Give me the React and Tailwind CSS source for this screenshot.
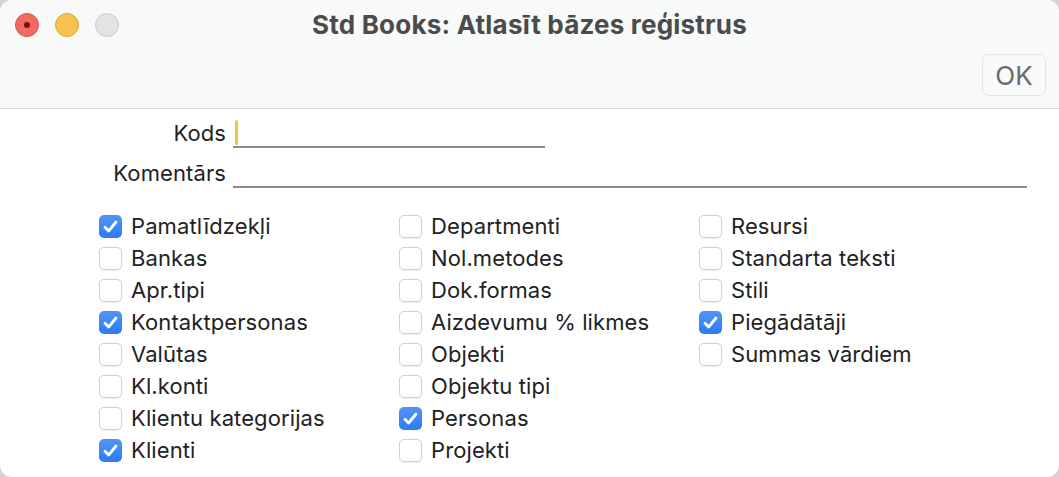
import React from "react";

const columns = [
  [
    ["Pamatlīdzekļi", true],
    ["Bankas", false],
    ["Apr.tipi", false],
    ["Kontaktpersonas", true],
    ["Valūtas", false],
    ["Kl.konti", false],
    ["Klientu kategorijas", false],
    ["Klienti", true],
  ],
  [
    ["Departmenti", false],
    ["Nol.metodes", false],
    ["Dok.formas", false],
    ["Aizdevumu % likmes", false],
    ["Objekti", false],
    ["Objektu tipi", false],
    ["Personas", true],
    ["Projekti", false],
  ],
  [
    ["Resursi", false],
    ["Standarta teksti", false],
    ["Stili", false],
    ["Piegādātāji", true],
    ["Summas vārdiem", false],
  ],
];

function Check({ label, checked }) {
  return (
    <div className="flex h-[32px] items-center gap-[9px]">
      {checked ? (
        <span className="flex h-[23px] w-[23px] items-center justify-center rounded-[5px] bg-gradient-to-b from-[#4f95f8] to-[#2f7af5]">
          <svg width="15" height="13" viewBox="0 0 15 13" fill="none">
            <path d="M2 7.2 L5.6 11 L13 2" stroke="#fff" strokeWidth="2.8" strokeLinecap="round" strokeLinejoin="round" />
          </svg>
        </span>
      ) : (
        <span className="h-[23px] w-[23px] rounded-[5px] border border-[#d2d2d2] bg-white shadow-[0_0.5px_1px_rgba(0,0,0,0.08)]" />
      )}
      <span className="text-[22px] tracking-[0.1px] text-[#222]">{label}</span>
    </div>
  );
}

export default function App() {
  return (
    <div className="h-[477px] w-[1059px] bg-[#d4d4d4] font-['Inter',sans-serif]">
      <div className="flex h-full flex-col overflow-hidden rounded-[12px] bg-white">
        <header className="flex h-[109px] flex-col border-b border-[#dcdcdc] bg-[#f8f9f9]">
          <div className="relative flex h-[49px] items-center justify-center">
            <div className="absolute left-[15px] top-[13px] flex gap-[16px]">
              <span className="flex h-[24px] w-[24px] items-center justify-center rounded-full border border-[#d9564b] bg-[#ef6b5f]">
                <span className="h-[6px] w-[6px] rounded-full bg-[#7d0f0a]" />
              </span>
              <span className="h-[24px] w-[24px] rounded-full border border-[#dfa73a] bg-[#f6c24f]" />
              <span className="h-[24px] w-[24px] rounded-full border border-[#cbcbcb] bg-[#e3e3e3]" />
            </div>
            <h1 className="text-[26px] font-bold tracking-[0.2px] text-[#4b4b4b]">Std Books: Atlasīt bāzes reģistrus</h1>
          </div>
          <div className="flex justify-end pr-[13px] pt-[5px]">
            <button className="h-[42px] w-[64px] rounded-[7px] border border-[#e4e4e4] bg-[#f9fafa] text-[26px] text-[#6b6b6b]">
              OK
            </button>
          </div>
        </header>

        <main className="flex flex-col pt-[9px]">
          <div className="flex h-[30px] items-center">
            <span className="w-[226px] text-right text-[22px] tracking-[0.1px] text-[#222]">Kods</span>
            <div className="ml-[7px] flex h-[30px] w-[312px] items-center border-b-2 border-[#8c8c8c] pl-[2px]">
              <span className="h-[25px] w-[3px] rounded-full bg-[#f5c342]" />
            </div>
          </div>
          <div className="mt-[10px] flex h-[30px] items-center">
            <span className="w-[226px] text-right text-[22px] tracking-[0.1px] text-[#222]">Komentārs</span>
            <div className="ml-[7px] h-[30px] w-[794px] border-b-2 border-[#8c8c8c]" />
          </div>

          <div className="mt-[22px] grid grid-cols-[300px_300px_300px] pl-[99px]">
            {columns.map((col, i) => (
              <div key={i} className="flex flex-col">
                {col.map(([label, checked]) => (
                  <Check key={label} label={label} checked={checked} />
                ))}
              </div>
            ))}
          </div>
        </main>
      </div>
    </div>
  );
}
